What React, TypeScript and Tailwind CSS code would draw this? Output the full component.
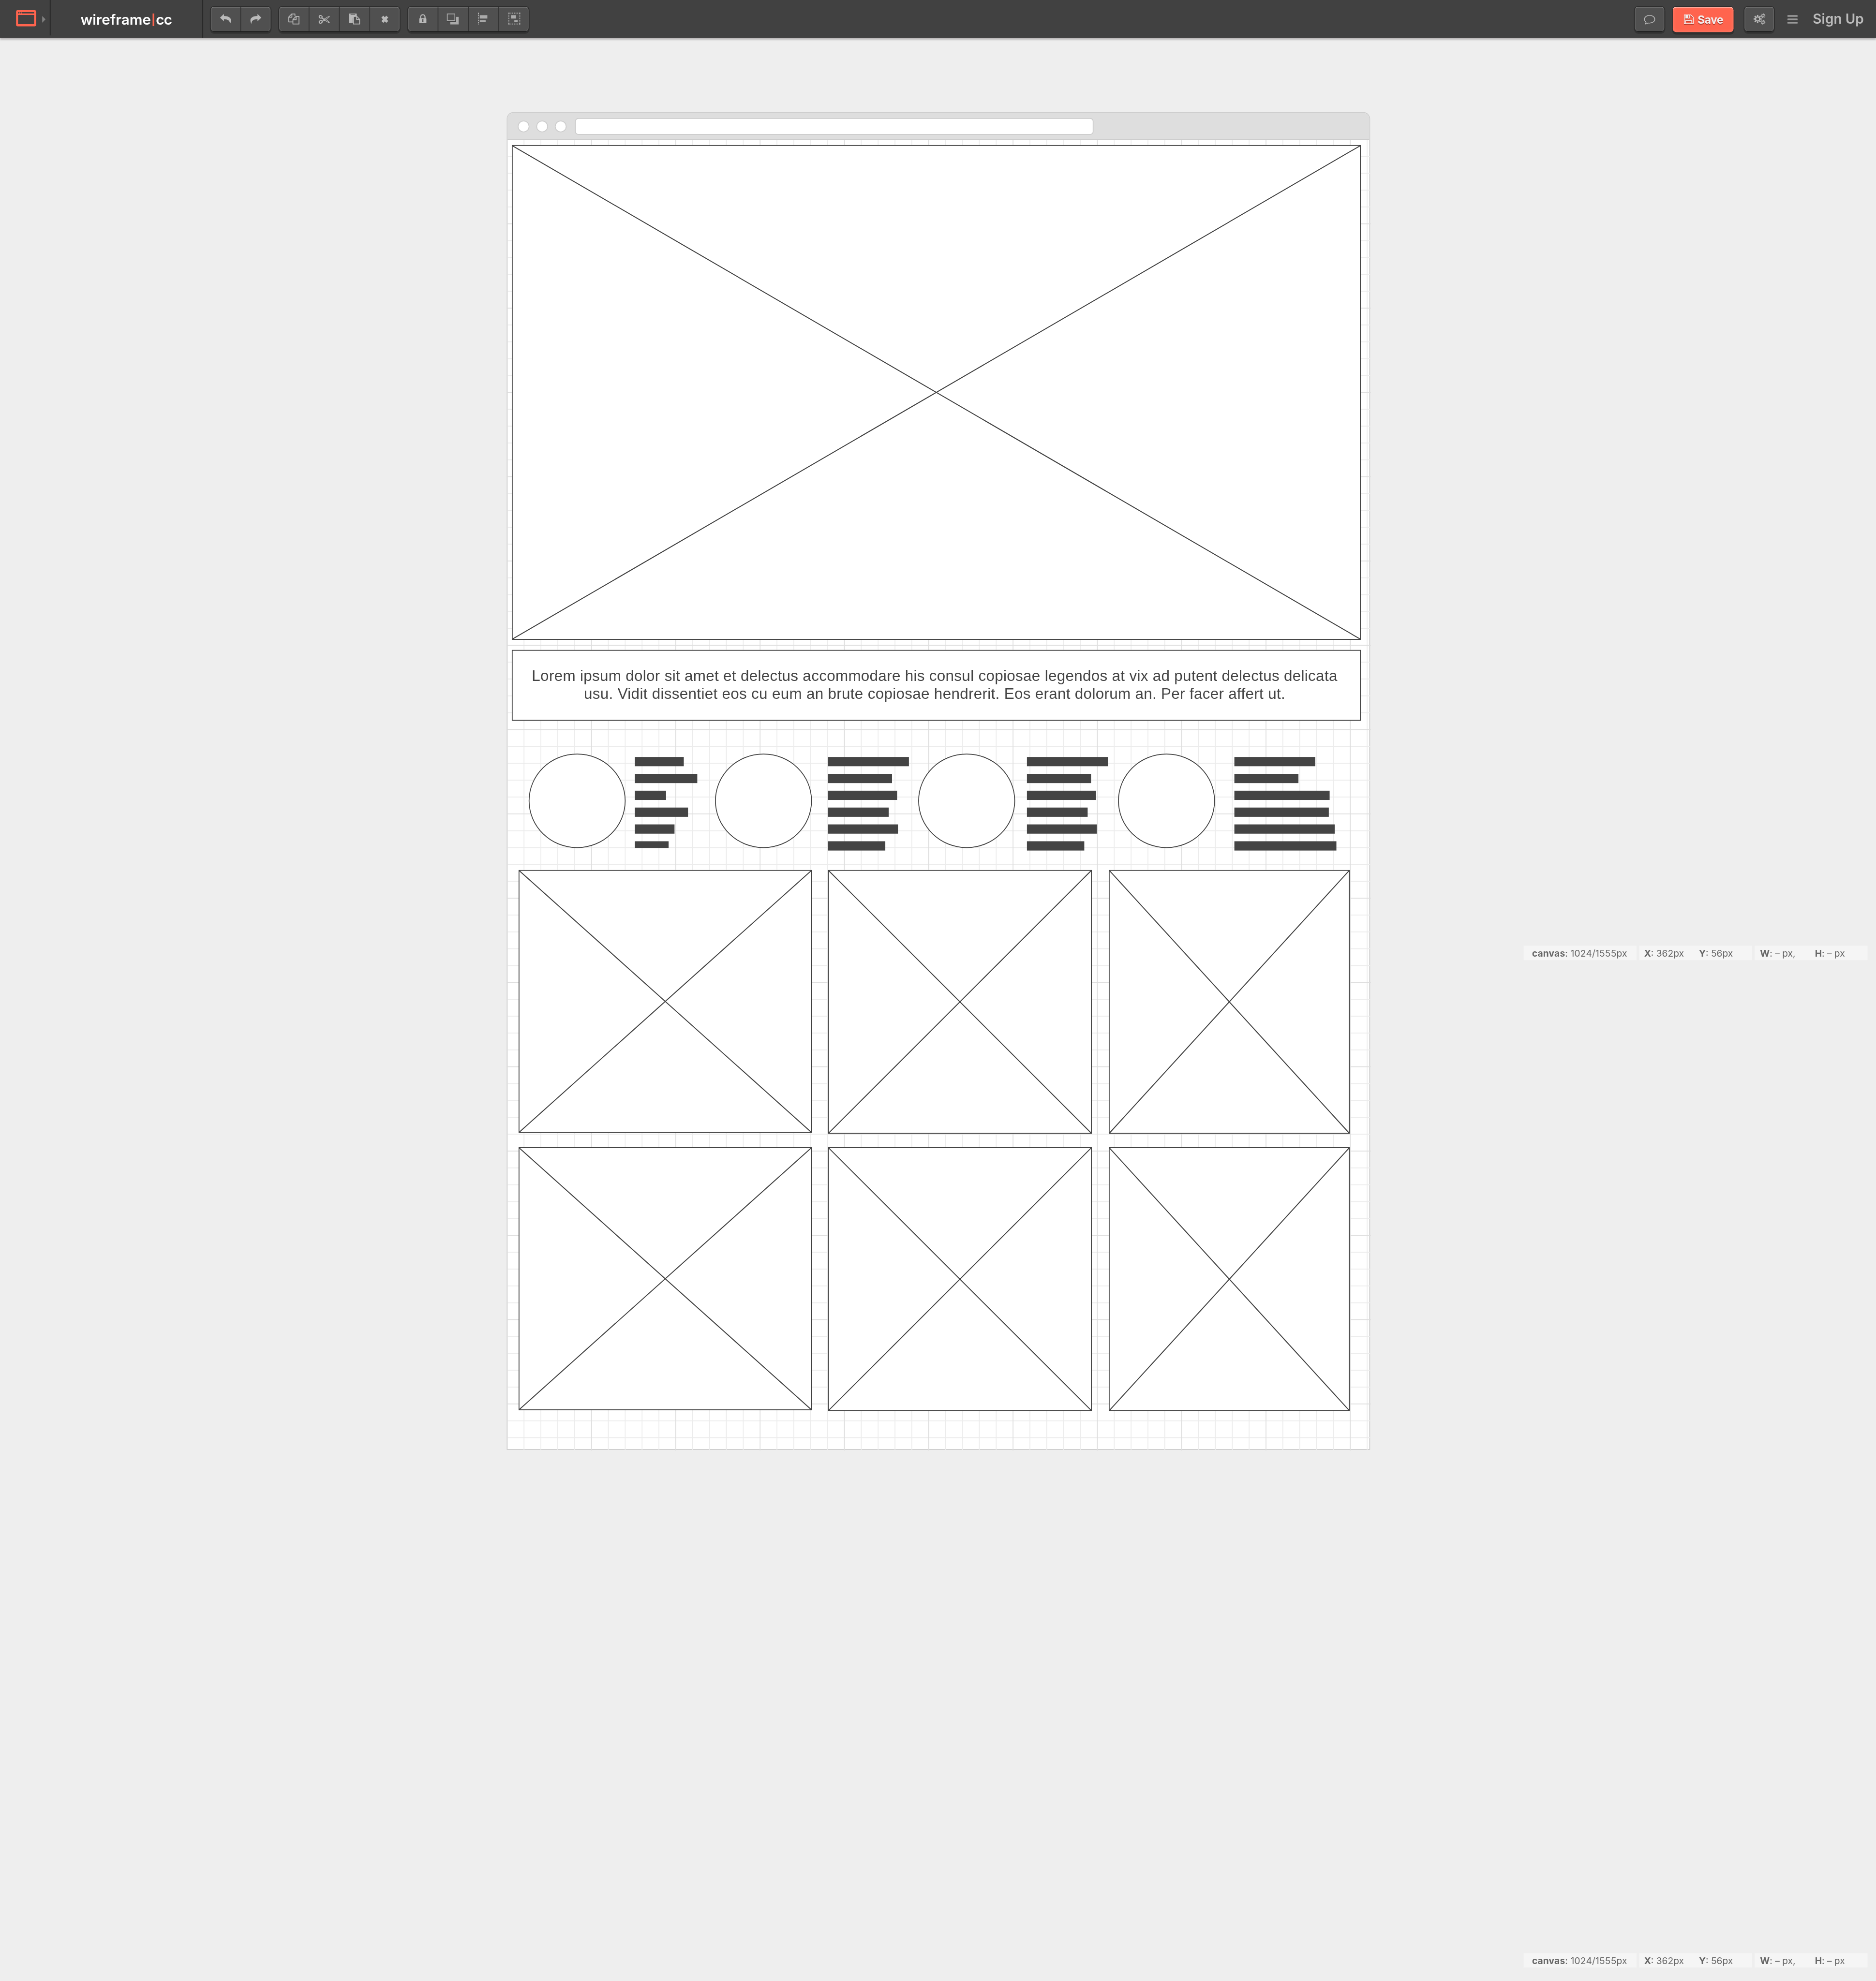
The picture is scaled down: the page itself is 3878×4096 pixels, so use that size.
import React from "react";

type Box = { x: number; y: number; w: number; h: number };

const BAR_TOPS = [898, 918, 938, 958, 978, 998];

const HERO: Box = { x: 607, y: 172, w: 1007, h: 587 };

const CARDS: Box[] = [
  { x: 615, y: 1032, w: 348, h: 312 },
  { x: 982, y: 1032, w: 313, h: 313 },
  { x: 1315, y: 1032, w: 286, h: 313 },
  { x: 615, y: 1361, w: 348, h: 312 },
  { x: 982, y: 1361, w: 313, h: 313 },
  { x: 1315, y: 1361, w: 286, h: 313 },
];

const CIRCLES = [627, 848, 1089, 1326];

const BAR_COLUMNS = [
  { x: 753, widths: [58, 74, 37, 63, 47, 40], lastHeight: 8 },
  { x: 982, widths: [96, 76, 82, 72, 83, 68], lastHeight: 11 },
  { x: 1218, widths: [96, 76, 82, 72, 83, 68], lastHeight: 11 },
  { x: 1464, widths: [96, 76, 113, 112, 119, 121], lastHeight: 11 },
];

// Node coordinates are window based; the stage starts at (601, 133).
const place = (b: Box): React.CSSProperties => ({
  left: b.x - 601,
  top: b.y - 133,
  width: b.w,
  height: b.h,
});

function ImageBox({ box }: { box: Box }) {
  return (
    <div className="absolute bg-white" style={place(box)}>
      <svg className="block" width={box.w} height={box.h} stroke="#404040" fill="none">
        <rect x="0.5" y="0.5" width={box.w - 1} height={box.h - 1} strokeWidth="1.1" />
        <path d={`M1 1L${box.w - 1} ${box.h - 1}M${box.w - 1} 1L1 ${box.h - 1}`} strokeWidth="1.15" />
      </svg>
    </div>
  );
}

function Grid() {
  const cols = Array.from({ length: 51 }, (_, i) => 19 + i * 20);
  const rows = Array.from({ length: 77 }, (_, i) => 19 + i * 20);
  const major = (v: number) => v % 100 === 99;
  return (
    <svg className="absolute top-[33px] left-px" width="1024" height="1555">
      <g fill="#ececec">
        {rows.filter((v) => !major(v)).map((v) => (
          <rect key={v} x="0" y={v} width="1023" height="1" />
        ))}
        {cols.filter((v) => !major(v)).map((v) => (
          <rect key={v} x={v} y="0" width="1" height="1554" />
        ))}
      </g>
      <g fill="#dedede">
        {rows.filter(major).map((v) => (
          <rect key={v} x="0" y={v} width="1024" height="1" />
        ))}
        {cols.filter(major).map((v) => (
          <rect key={v} x={v} y="0" width="1" height="1555" />
        ))}
      </g>
    </svg>
  );
}

function Stage() {
  return (
    <main className="relative mt-[88px] ml-[601px] h-[1587px] w-[1024px]">
      <div className="h-full rounded-t-[8px] border border-[#ccc] bg-white">
        <div className="flex h-8 items-center rounded-t-[7px] border-b border-[#ccc] bg-[#dedede] pl-3">
          <div className="flex gap-2">
            <span className="size-[14px] rounded-full border border-[#ccc] bg-white" />
            <span className="size-[14px] rounded-full border border-[#ccc] bg-white" />
            <span className="size-[14px] rounded-full border border-[#ccc] bg-white" />
          </div>
          <div className="ml-[10px] h-5 w-[615px] rounded-[4px] border border-[#ccc] bg-white" />
        </div>
      </div>
      <Grid />
      <ImageBox box={HERO} />
      <div
        className="absolute flex flex-col items-center border border-[#404040] bg-white pt-[20px] font-['Liberation_Sans',sans-serif] text-[18px] leading-[21px] tracking-[0.184px] whitespace-nowrap text-[#444]"
        style={place({ x: 607, y: 771, w: 1007, h: 84 })}
      >
        <p className="translate-x-[-2px]">
          Lorem ipsum dolor sit amet et delectus accommodare his consul copiosae legendos at vix ad putent delectus delicata
        </p>
        <p className="translate-x-[-2px]">
          usu. Vidit dissentiet eos cu eum an brute copiosae hendrerit. Eos erant dolorum an. Per facer affert ut.
        </p>
      </div>
      {CIRCLES.map((x) => (
        <div
          key={x}
          className="absolute rounded-[50%] border border-[#404040] bg-white"
          style={place({ x, y: 894, w: 115, h: 112 })}
        />
      ))}
      {BAR_COLUMNS.map((col) =>
        col.widths.map((w, i) => (
          <div
            key={`${col.x}-${i}`}
            className="absolute bg-[#444]"
            style={place({ x: col.x, y: BAR_TOPS[i], w, h: i === 5 ? col.lastHeight : 11 })}
          />
        )),
      )}
      {CARDS.map((b) => (
        <ImageBox key={`${b.x}-${b.y}`} box={b} />
      ))}
    </main>
  );
}

/* Each icon is drawn on a 35x29 field, the size of its button. */
function Icon({ children }: { children: React.ReactNode }) {
  return (
    <svg className="block h-[29px] w-[35px]" viewBox="0 0 35 29" fill="#b9b9b9">
      {children}
    </svg>
  );
}

const UndoShape = () => (
  <path d="M11 12.9 15.6 8.5V11C21 11 24.3 13.3 24 16.6 23.9 18 23.4 19.3 22.7 20.2 22.7 16.4 20.3 14.8 15.6 14.8V17.3Z" />
);

const UndoIcon = () => (
  <Icon>
    <UndoShape />
  </Icon>
);

const RedoIcon = () => (
  <Icon>
    <g transform="translate(35 0) scale(-1 1)">
      <UndoShape />
    </g>
  </Icon>
);

const CopyIcon = () => (
  <Icon>
    <g fill="none" stroke="#b9b9b9" strokeWidth="1" strokeLinejoin="round">
      <path d="M16.2 18H11.5V12.2L15 8.5H18.8V11.2M11.5 12.4H15.2V8.5" />
      <path d="M16.4 15.2 20 11.5H23.6V20.5H16.4ZM16.4 15.4H20.2V11.5" />
    </g>
  </Icon>
);

const CutIcon = () => (
  <Icon>
    <g fill="none" stroke="#b9b9b9">
      <ellipse cx="13.3" cy="12" rx="1.8" ry="1.5" strokeWidth="1.1" transform="rotate(20 13.3 12)" />
      <ellipse cx="13.3" cy="18" rx="1.8" ry="1.5" strokeWidth="1.1" transform="rotate(-20 13.3 18)" />
      <path
        d="M15 13 17.4 14.6 23.2 11.2C23.6 11 24 11.5 23.6 11.9L18.6 16 15 17.6M15 17 17.2 15.7M18.6 14.2 23.6 18.4C23.9 18.8 23.5 19.3 23.1 19L17.4 15.7 15 13.8"
        strokeWidth=".65"
      />
    </g>
    <circle cx="17.7" cy="15" r=".7" />
  </Icon>
);

const PasteIcon = () => (
  <Icon>
    <path
      fillRule="evenodd"
      d="M11.5 8H19.6Q20.1 8 20.1 8.5V10.9H18.4L15.3 14V19H11.5Q11 19 11 18.5V8.5Q11 8 11.5 8ZM12.8 9V9.8H18.3V9Z"
    />
    <path
      d="M16.2 11.5H20.3L23.5 14.9V20.5H16.2ZM20 11.5V15.2H23.5"
      fill="none"
      stroke="#b9b9b9"
      strokeLinejoin="round"
    />
  </Icon>
);

const DeleteIcon = () => (
  <Icon>
    <path d="M14.5 11.7 20.3 18.1M20.3 11.7 14.5 18.1" stroke="#b9b9b9" strokeWidth="3.2" />
  </Icon>
);

const LockIcon = () => (
  <Icon>
    <rect x="13.3" y="13.6" width="8.4" height="5.7" rx=".8" />
    <path d="M14.9 14V12.2a2.6 2.8 0 0 1 5.2 0V14" fill="none" stroke="#b9b9b9" strokeWidth="1.3" />
    <path d="M17.5 14.8a.95.95 0 0 1 .5 1.75L18.4 18.2H16.6L17 16.55a.95.95 0 0 1 .5-1.75Z" fill="#4a4a4a" />
  </Icon>
);

const LayersIcon = () => (
  <Icon>
    <rect x="14" y="12" width="10" height="9" fill="#aaa" />
    <rect x="10" y="8" width="11" height="10" fill="#404040" />
    <rect x="10.5" y="8.5" width="9" height="8" fill="#505050" stroke="#aaa" />
  </Icon>
);

const AlignIcon = () => (
  <Icon>
    <line x1="11.5" y1="7" x2="11.5" y2="21" stroke="#bbb" strokeDasharray="2 1 1 1 1 1 1 1 1 1 1 1 1 1" />
    <rect x="13" y="10" width="9" height="4" fill="#aaa" />
    <rect x="13" y="16" width="7" height="2" fill="#aaa" />
  </Icon>
);

const GroupIcon = () => (
  <Icon>
    <g stroke="#bbb" fill="none">
      <path d="M11 7.5H25M11 20.5H25" strokeDasharray="1.5 1 1 1 1 1 1 1 1 1 1 1 1.5 5" />
      <path d="M11.5 7V21M24.5 7V21" strokeDasharray="1.5 1 1 1 1 1 1 1 1 1 1 1 1.5 5" />
    </g>
    <rect x="14" y="10" width="6" height="4" fill="#aaa" />
    <rect x="18" y="16" width="4" height="2" fill="#aaa" />
  </Icon>
);

const CommentIcon = () => (
  <Icon>
    <path
      d="M17.5 10.2c3.4 0 6.1 2 6.1 4.6s-2.7 4.6-6.1 4.6c-.7 0-1.3-.1-1.9-.2-1 .8-2 1.2-3.4 1.3.7-.7 1-1.4 1.1-2.2-1.2-.9-1.9-2.1-1.9-3.5 0-2.6 2.7-4.6 6.1-4.6Z"
      fill="none"
      stroke="#b9b9b9"
      strokeWidth=".9"
      strokeLinejoin="round"
    />
  </Icon>
);

function Gear({ cx, cy, r, hole, tooth, turn }: { cx: number; cy: number; r: number; hole: number; tooth: number; turn: number }) {
  return (
    <g transform={`translate(${cx} ${cy}) rotate(${turn})`}>
      <circle r={(r + hole) / 2 - tooth * 0.25} fill="none" stroke="#b9b9b9" strokeWidth={r - hole - tooth * 0.5} />
      {[0, 45, 90, 135, 180, 225, 270, 315].map((a) => (
        <rect key={a} x={-tooth / 2} y={-r - tooth * 0.45} width={tooth} height={tooth} transform={`rotate(${a})`} />
      ))}
    </g>
  );
}

const GearsIcon = () => (
  <Icon>
    <Gear cx={15.6} cy={14.5} r={4} hole={1.7} tooth={1.7} turn={0} />
    <Gear cx={22} cy={10.7} r={2.3} hole={0.9} tooth={1} turn={10} />
    <Gear cx={22} cy={18.3} r={2.3} hole={0.9} tooth={1} turn={10} />
  </Icon>
);

function ToolGroup({ children }: { children: React.ReactNode }) {
  return (
    <div className="relative mt-2 flex h-[29px] rounded-[4px] shadow-[0_0_0_1px_#2e2e2e,0_1px_0_0_#1f1f1f,0_1.5px_0_1px_#333,0_2.5px_0_0.5px_#333]">
      <div className="flex gap-px overflow-hidden rounded-[4px] bg-[#333]">
        {React.Children.map(children, (c) => (
          <button className="block h-[29px] w-[35px] border-t border-[#767676] bg-[#505050]">
            <span className="-mt-px block">{c}</span>
          </button>
        ))}
      </div>
      <div className="absolute inset-0 rounded-[4px] shadow-[inset_1px_0_0_rgba(255,255,255,.1),inset_-1px_0_0_rgba(255,255,255,.1),inset_0_0.5px_0.5px_rgba(255,255,255,.1)]" />
      <div className="absolute top-full right-[3px] left-[3px] h-px bg-[#1f1f1f]" />
    </div>
  );
}

function Header() {
  return (
    <header className="relative flex h-[45px] bg-[#414141] font-[Inter,sans-serif] shadow-[0_2px_2px_rgba(30,20,25,.26)]">
      <div className="flex h-[42px] w-[60px] border-r border-[#222] pt-3 pl-[19px]">
        <svg width="24" height="20" viewBox="0 0 24 20">
          <path
            fill="#ff644e"
            fillRule="evenodd"
            d="M2 0H22A2 2 0 0 1 24 2V17.3A2 2 0 0 1 22 19.3H2A2 2 0 0 1 0 17.3V2A2 2 0 0 1 2 0ZM2.4 5.8V16.7H21.5V5.8ZM7.3 2.4V3.9H21.5V2.4Z"
          />
          <circle cx="3.3" cy="3.1" r=".9" fill="#414141" />
          <circle cx="5.7" cy="3.1" r=".9" fill="#414141" />
        </svg>
        <svg className="mt-[7px] ml-[7px]" width="4" height="8">
          <path d="M0 0 4 4 0 8Z" fill="#808080" />
        </svg>
      </div>
      <div className="w-[181px] border-r border-[#222]">
        <div className="flex pt-[11.5px] pl-[35.5px] text-[17px] leading-[22px] font-semibold text-white">
          <span className="w-[85.3px]">wireframe</span>
          <span className="mt-1 h-[15px] w-[2.5px] bg-[#ff644e]" />
          <span className="ml-[1.6px] tracking-[-0.4px]">cc</span>
        </div>
      </div>
      <div className="ml-[9px] flex gap-[10px]">
        <ToolGroup>
          <UndoIcon />
          <RedoIcon />
        </ToolGroup>
        <ToolGroup>
          <CopyIcon />
          <CutIcon />
          <PasteIcon />
          <DeleteIcon />
        </ToolGroup>
        <ToolGroup>
          <LockIcon />
          <LayersIcon />
          <AlignIcon />
          <GroupIcon />
        </ToolGroup>
      </div>
      <div className="ml-auto flex w-[286px]">
        <ToolGroup>
          <CommentIcon />
        </ToolGroup>
        <button className="mt-2 ml-[10px] flex h-[30px] w-[72px] rounded-[4px] bg-[#ff644e] pl-[13px] text-[13px] leading-[30px] font-bold tracking-[-0.2px] text-[#f3eeee] shadow-[0_-1px_0_0_#2e2e2e,0_1.5px_0_1px_#303030,0_2.5px_0_0.5px_#303030,inset_0_1px_0_#ffb9ac,inset_0_0_4px_#ff8573] [text-shadow:0_1px_0_rgba(120,30,20,.6)]">
          <svg className="mt-[8.5px] drop-shadow-[0_1px_0_rgba(120,30,20,.6)]" width="12" height="12" viewBox="0 0 12 12">
            <path d="M.6.7H8.2L11.3 3.5V11.2H.6Z" fill="none" stroke="#f3eeee" strokeWidth=".9" strokeLinejoin="round" />
            <path d="M2 .5H7.5V5H2ZM5.2 1.3V4.2H6.6V1.3Z" fill="#f3eeee" fillRule="evenodd" />
            <path d="M2.2 11V7.3H9.4V11" fill="none" stroke="#f3eeee" strokeWidth=".8" />
          </svg>
          <span className="ml-[4.5px]">Save</span>
        </button>
        <div className="ml-[13px]">
          <ToolGroup>
            <GearsIcon />
          </ToolGroup>
        </div>
        <div className="mt-[18px] ml-4 flex w-3 flex-col gap-[1.8px]">
          <span className="h-[2.2px] rounded-[.5px] bg-[#999]" />
          <span className="h-[2.2px] rounded-[.5px] bg-[#999]" />
          <span className="h-[2.2px] rounded-[.5px] bg-[#999]" />
        </div>
        <span className="ml-[18px] pt-[11px] text-[16px] leading-[22px] font-semibold tracking-[0.05px] whitespace-nowrap text-[#bbb]">
          Sign Up
        </span>
      </div>
    </header>
  );
}

function StatusBar() {
  return (
    <div className="flex gap-[3px] font-[Inter,sans-serif] text-[11px] leading-[18.5px] whitespace-nowrap text-[#666]">
      <div className="h-[17px] w-[134px] bg-[#f5f5f5] pl-[10px] tracking-[0.1px]">
        <b>canvas</b>: 1024/1555px
      </div>
      <div className="flex h-[17px] w-[134px] bg-[#f5f5f5] pl-[6px]">
        <span className="w-[65px]">
          <b>X</b>: 362px
        </span>
        <span>
          <b>Y</b>: 56px
        </span>
      </div>
      <div className="flex h-[17px] w-[134px] bg-[#f5f5f5] pl-[6.5px]">
        <span className="w-[65px]">
          <b>W</b>: – px,
        </span>
        <span>
          <b>H</b>: – px
        </span>
      </div>
    </div>
  );
}

export default function App() {
  return (
    <div className="h-[4096px] w-[3878px] overflow-hidden bg-[#eee]">
      <div className="relative h-[2350px] w-[2225px] origin-top-left scale-[1.74292] bg-[#eee]">
        <Header />
        <Stage />
        <div className="absolute top-[1122px] left-[1807px]">
          <StatusBar />
        </div>
        <div className="absolute top-[2317px] left-[1807px]">
          <StatusBar />
        </div>
      </div>
    </div>
  );
}
